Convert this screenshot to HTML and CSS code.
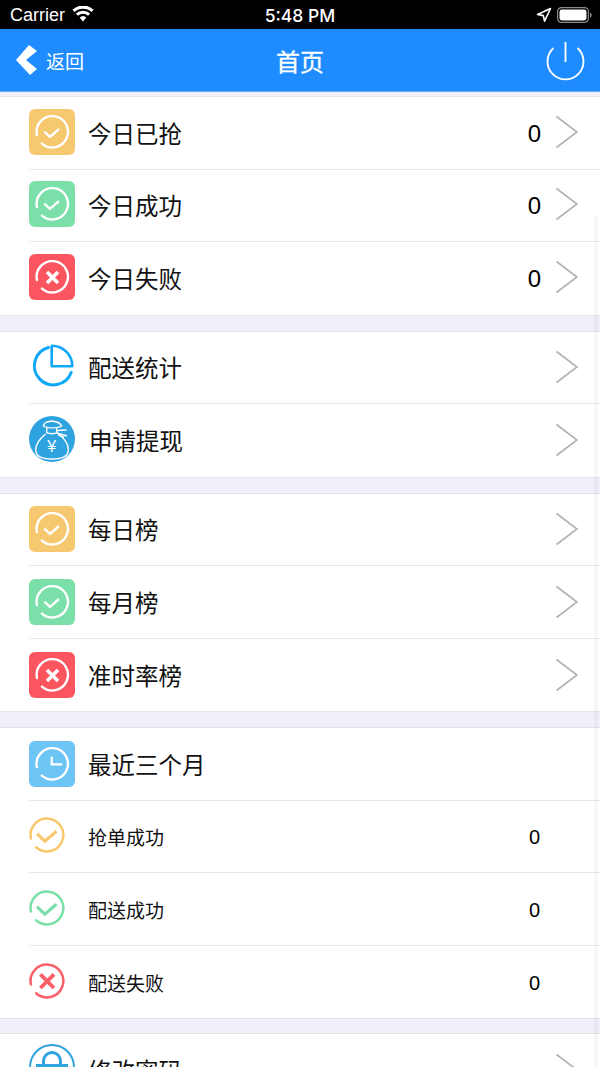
FILE: index.html
```html
<!DOCTYPE html>
<html lang="zh-CN">
<head>
    <meta charset="UTF-8">
    <title>首页</title>
    <link rel="stylesheet" href="styles.css">
</head>
<body>
    <svg class="defs" width="0" height="0">
        <symbol id="arc" viewBox="0 0 46 46">
            <path d="M7.9 26.1A15.7 15.7 0 1 1 12.9 34.6" fill="none" stroke="currentColor" stroke-width="2.4" stroke-linecap="round"/>
        </symbol>
        <symbol id="arrow" viewBox="0 0 22 32">
            <path d="M0.5 0.5L21 16L0.5 31.5" fill="none" stroke="#b3b3b3" stroke-width="1.8"/>
        </symbol>
    </svg>

    <div class="phone">
        <div class="status">
            <div class="status-left">
                <span>Carrier</span>
                <svg class="wifi" width="22" height="16" viewBox="0 0 22 16">
                    <path d="M11 15.5L7.6 11.6A5 5 0 0 1 14.4 11.6ZM5.9 9.8L3.9 7.6A10.5 10.5 0 0 1 18.1 7.6L16.1 9.8A7.7 7.7 0 0 0 5.9 9.8ZM2.5 6L0.4 3.7A15.6 15.6 0 0 1 21.6 3.7L19.5 6A12.6 12.6 0 0 0 2.5 6Z" fill="#fff"/>
                </svg>
            </div>
            <div class="status-time">5:48 PM</div>
            <div class="status-right">
                <svg width="16" height="16" viewBox="0 0 16 16">
                    <path d="M14.5 1.5L8.6 14.2L7.3 8.6L1.6 7.4Z" fill="none" stroke="#fff" stroke-width="1.6" stroke-linejoin="round"/>
                </svg>
                <svg width="36" height="16" viewBox="0 0 36 16">
                    <rect x="0.6" y="0.6" width="30.8" height="14.8" rx="4" fill="none" stroke="#8c8c8c" stroke-width="1.2"/>
                    <rect x="2.5" y="2.5" width="27" height="11" rx="2.4" fill="#fff"/>
                    <path d="M33 5.4C34.2 5.8 34.6 6.8 34.6 8S34.2 10.2 33 10.6Z" fill="#8c8c8c"/>
                </svg>
            </div>
        </div>

        <div class="nav">
            <div class="back">
                <svg width="22" height="30" viewBox="0 0 22 30">
                    <polygon points="0,15 13,0 21,6 10,15 21,24 14,30" fill="#fff"/>
                </svg>
                <span>返回</span>
            </div>
            <div class="nav-title">首页</div>
            <svg class="power" width="40" height="40" viewBox="0 0 40 40">
                <path d="M7.5 7A18 18 0 1 0 31.5 7M19.5 1V21" fill="none" stroke="#fff" stroke-width="1.8"/>
            </svg>
        </div>

        <div class="strip"></div>

        <div class="section section-top">
            <div class="row">
                <svg class="icon" viewBox="0 0 46 46"><rect width="46" height="46" rx="6" fill="#f6c86f"/><use href="#arc" width="46" height="46" color="#fff"/><path d="M15.3 22.7L21 28L30 20" fill="none" stroke="#fff" stroke-width="2.4"/></svg>
                <div class="label">今日已抢</div>
                <div class="value">0</div>
                <svg class="chevron"><use href="#arrow"/></svg>
            </div>
            <div class="row">
                <svg class="icon" viewBox="0 0 46 46"><rect width="46" height="46" rx="6" fill="#7adfa9"/><use href="#arc" width="46" height="46" color="#fff"/><path d="M15.3 22.7L21 28L30 20" fill="none" stroke="#fff" stroke-width="2.4"/></svg>
                <div class="label">今日成功</div>
                <div class="value">0</div>
                <svg class="chevron"><use href="#arrow"/></svg>
            </div>
            <div class="row">
                <svg class="icon" viewBox="0 0 46 46"><rect width="46" height="46" rx="6" fill="#fb5660"/><use href="#arc" width="46" height="46" color="#fff"/><path d="M18 18L29 29M29 18L18 29" fill="none" stroke="#fff" stroke-width="3.6"/></svg>
                <div class="label">今日失败</div>
                <div class="value">0</div>
                <svg class="chevron"><use href="#arrow"/></svg>
            </div>
        </div>

        <div class="section">
            <div class="row">
                <svg class="icon" viewBox="0 0 46 46"><path d="M19.5 3.5A19 19 0 1 0 42.2 28.5" fill="none" stroke="#0fa8f8" stroke-width="3" stroke-linecap="round"/><path d="M22.7 1.7V22.2H43.3A20.5 20.5 0 0 0 22.7 1.7Z" fill="none" stroke="#0fa8f8" stroke-width="2.6" stroke-linejoin="round"/></svg>
                <div class="label">配送统计</div>
                <svg class="chevron"><use href="#arrow"/></svg>
            </div>
            <div class="row">
                <svg class="icon icon-bag" viewBox="0 0 46 46">
                    <circle cx="23" cy="23" r="23" fill="#2fa3e0"/>
                    <path d="M16.5 18C10.5 23 6.7 28 6.7 34C6.7 40 12 43 23 43S39.3 40 39.3 34C39.3 28 35 22 29.5 18" fill="none" stroke="#fff" stroke-width="1.4"/>
                    <path d="M14.3 10C16 5 19 6 22.7 5C26 6 30 5 32.7 10C29 12.5 18 12.5 14.3 10ZM17.7 12V16.7C20 18 26 18 27.7 16.7V12M28 14.5L37.5 14M28 17L38 20M29 18.5L35 21.5" fill="none" stroke="#fff" stroke-width="1.4" stroke-linejoin="round"/>
                    <text x="22.7" y="35.5" class="yen">¥</text>
                </svg>
                <div class="label label-shift">申请提现</div>
                <svg class="chevron"><use href="#arrow"/></svg>
            </div>
        </div>

        <div class="section">
            <div class="row">
                <svg class="icon" viewBox="0 0 46 46"><rect width="46" height="46" rx="6" fill="#f6c86f"/><use href="#arc" width="46" height="46" color="#fff"/><path d="M15.3 22.7L21 28L30 20" fill="none" stroke="#fff" stroke-width="2.4"/></svg>
                <div class="label">每日榜</div>
                <svg class="chevron"><use href="#arrow"/></svg>
            </div>
            <div class="row">
                <svg class="icon" viewBox="0 0 46 46"><rect width="46" height="46" rx="6" fill="#7adfa9"/><use href="#arc" width="46" height="46" color="#fff"/><path d="M15.3 22.7L21 28L30 20" fill="none" stroke="#fff" stroke-width="2.4"/></svg>
                <div class="label">每月榜</div>
                <svg class="chevron"><use href="#arrow"/></svg>
            </div>
            <div class="row">
                <svg class="icon" viewBox="0 0 46 46"><rect width="46" height="46" rx="6" fill="#fb5660"/><use href="#arc" width="46" height="46" color="#fff"/><path d="M18 18L29 29M29 18L18 29" fill="none" stroke="#fff" stroke-width="3.6"/></svg>
                <div class="label">准时率榜</div>
                <svg class="chevron"><use href="#arrow"/></svg>
            </div>
        </div>

        <div class="section section-recent">
            <div class="row">
                <svg class="icon" viewBox="0 0 46 46"><rect width="46" height="46" rx="6" fill="#6cc5f5"/><use href="#arc" width="46" height="46" color="#fff"/><path d="M22.7 15.7V23.3H33.3" fill="none" stroke="#fff" stroke-width="2.2"/></svg>
                <div class="label">最近三个月</div>
            </div>
            <div class="row row-plain">
                <svg class="icon-small" viewBox="6.05 5.55 34.5 34.5"><use href="#arc" width="46" height="46" color="#f9c76c"/><path d="M13.8 21.6L21.2 28.7L32.4 19.2" fill="none" stroke="#f9c76c" stroke-width="3"/></svg>
                <div class="label label-small">抢单成功</div>
                <div class="value value-small">0</div>
            </div>
            <div class="row row-plain">
                <svg class="icon-small" viewBox="6.05 5.55 34.5 34.5"><use href="#arc" width="46" height="46" color="#7adfa9"/><path d="M13.8 21.6L21.2 28.7L32.4 19.2" fill="none" stroke="#7adfa9" stroke-width="3"/></svg>
                <div class="label label-small">配送成功</div>
                <div class="value value-small">0</div>
            </div>
            <div class="row row-plain">
                <svg class="icon-small" viewBox="6.05 5.55 34.5 34.5"><use href="#arc" width="46" height="46" color="#fb5f68"/><path d="M17 16.5L30 29.5M30 16.5L17 29.5" fill="none" stroke="#fb5f68" stroke-width="3.6"/></svg>
                <div class="label label-small">配送失败</div>
                <div class="value value-small">0</div>
            </div>
        </div>

        <div class="section">
            <div class="row">
                <svg class="icon icon-lock" viewBox="0 0 46 46">
                    <circle cx="23" cy="23" r="22" fill="none" stroke="#2fa3e0" stroke-width="2"/>
                    <path d="M14.5 22V17A8.5 8.5 0 0 1 31.5 17V22" fill="none" stroke="#2fa3e0" stroke-width="3"/>
                    <rect x="7" y="20" width="32" height="3.5" fill="#2fa3e0"/>
                    <rect x="10" y="23" width="26" height="14" rx="2" fill="none" stroke="#2fa3e0" stroke-width="2"/>
                </svg>
                <div class="label">修改密码</div>
                <svg class="chevron"><use href="#arrow"/></svg>
            </div>
        </div>

        <div class="scrollbar"></div>
    </div>
</body>
</html>
```

FILE: styles.css
```css
* {
    margin: 0;
    padding: 0;
    box-sizing: border-box;
}
html, body {
    height: 100%;
    overflow: hidden;
}
body {
    background: #f0effa;
    font-family: "Liberation Sans", "Noto Sans CJK SC", sans-serif;
}
.defs {
    position: absolute;
}
.phone {
    position: relative;
    height: 1067px;
    overflow: hidden;
}

.status {
    height: 29px;
    background: #000;
    color: #fff;
    font-size: 18px;
    padding: 1px 10px 0;
    display: grid;
    grid-template-columns: 1fr auto 1fr;
    align-items: center;
}
.status-left {
    display: flex;
    align-items: center;
    gap: 7px;
}
.status-time {
    font-family: "Inter", "Liberation Sans", sans-serif;
    font-weight: 500;
    font-size: 17.5px;
}
.status-right {
    display: flex;
    align-items: center;
    justify-content: flex-end;
    gap: 5px;
    margin-right: -3px;
}
.wifi {
    margin-top: -3px;
}

.nav {
    height: 63px;
    background: #1e8cff;
    border-bottom: 1px solid #63aef5;
    color: #fff;
    display: flex;
    align-items: center;
    justify-content: space-between;
    padding: 0 14px 0 16px;
    position: relative;
}
.back {
    display: flex;
    align-items: center;
    gap: 8px;
    font-size: 19px;
}
.nav-title {
    position: absolute;
    left: 0;
    right: 0;
    text-align: center;
    font-size: 24px;
    -webkit-text-stroke: 0.35px #fff;
}
.power {
    margin-top: 2px;
}

.strip {
    height: 4px;
    background: #f0effa;
}

.section {
    background: #fff;
    border-top: 1px solid #e4e4e8;
    border-bottom: 1px solid #e4e4e8;
    margin-bottom: 15px;
}
.section-recent {
    margin-bottom: 14px;
}
.row {
    height: 72.5px;
    margin-left: 29px;
    padding-right: 22px;
    border-bottom: 1.5px solid #e8e8ec;
    display: flex;
    align-items: center;
}
.row:last-child {
    border-bottom: none;
}
.row-plain {
    padding-right: 60px;
}
.icon {
    width: 46px;
    height: 46px;
    flex: none;
    margin-right: 13px;
}
.icon-bag {
    margin-bottom: 3px;
}
.icon-lock {
    margin-bottom: 6px;
}
.icon-small {
    width: 36px;
    height: 36px;
    flex: none;
    margin-right: 23px;
    margin-bottom: 2px;
}
.section-top .icon, .section-top .chevron {
    margin-bottom: 2px;
}
.label {
    flex: 1;
    font-size: 23.5px;
    color: #111;
}
.label-shift {
    padding-left: 1px;
}
.label-small {
    font-size: 19px;
    padding-top: 1px;
}
.value {
    font-size: 24px;
    color: #000;
    padding-top: 2px;
}
.value-small {
    font-size: 20px;
    padding-top: 3px;
}
.chevron {
    width: 22px;
    height: 32px;
    flex: none;
    margin-left: 15px;
}
.yen {
    fill: #fff;
    font-size: 16px;
    text-anchor: middle;
}

.scrollbar {
    position: absolute;
    right: 2px;
    top: 215px;
    bottom: 0;
    width: 4px;
    background: rgba(0, 0, 0, 0.03);
    border-radius: 2px;
}
```
